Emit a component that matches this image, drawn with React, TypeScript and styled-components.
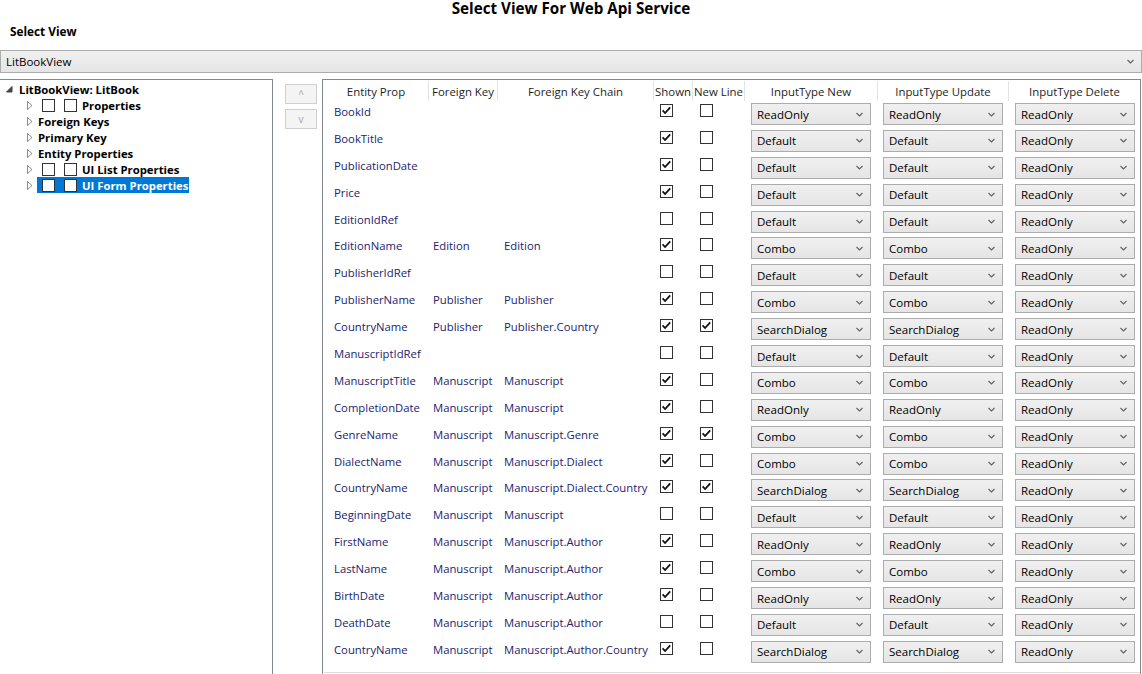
import React from "react";
import styled, { createGlobalStyle } from "styled-components";

const GlobalStyle = createGlobalStyle`
  html, body { margin: 0; padding: 0; background: #ffffff; }
  body {
    width: 1142px; height: 674px; overflow: hidden;
    font-family: "Open Sans", "Noto Sans", "Liberation Sans", sans-serif;
    font-size: 12px; color: #000;
  }
  * { box-sizing: border-box; }
`;

const Page = styled.div`
  display: flex; flex-direction: column; width: 1142px; height: 674px;
`;

const Title = styled.div`
  height: 17px; line-height: 17px; text-align: center;
  font-weight: 700; font-size: 15.2px; color: #000;
`;

const Label = styled.div`
  margin-top: 6px; height: 16px; line-height: 16px; padding-left: 10px;
  font-weight: 700; font-size: 11.8px;
`;

const ViewCombo = styled.div`
  margin-top: 11px; height: 23px; width: 1142px;
  border: 1px solid #acacac;
  background: linear-gradient(#f0f0f0, #e5e5e5);
  display: flex; align-items: center; justify-content: space-between;
  padding: 0 7px 0 5px; font-size: 11.5px;
`;

const Body = styled.div`
  margin-top: 6px; flex: 1; display: flex; min-height: 0;
`;

const TreePanel = styled.div`
  width: 273px; border-top: 1px solid #828790; border-right: 1px solid #828790;
  padding-top: 1px;
`;

const TreeRow = styled.div<{ $indent: number }>`
  height: 16px; display: flex; align-items: center;
  padding-left: ${(p) => p.$indent}px;
`;

const Expander = styled.span<{ $w: number }>`
  width: ${(p) => p.$w}px; height: 16px; display: inline-flex; align-items: center; justify-content: flex-start;
  flex: none;
`;

const TreeHeader = styled.span<{ $selected?: boolean }>`
  display: inline-flex; align-items: center; height: 16px; padding-right: 1px;
  font-weight: 700; font-size: 11.3px; white-space: nowrap;
  background: ${(p) => (p.$selected ? "#0078d7" : "transparent")};
  color: ${(p) => (p.$selected ? "#ffffff" : "#000")};
`;

const TreeBox = styled.span<{ $ml: number; $mr: number }>`
  width: 13px; height: 13px; border: 1px solid #333; background: #fff; flex: none;
  margin-left: ${(p) => p.$ml}px; margin-right: ${(p) => p.$mr}px;
`;

const TreeSpacer = styled.span`
  width: 1px; flex: none;
`;

const ButtonCol = styled.div`
  width: 49px; display: flex; flex-direction: column; gap: 5px; padding: 5px 0 0 12px;
`;

const MoveButton = styled.div`
  width: 32px; height: 20px; border: 1px solid #d0d0d0; background: #f4f4f4;
  color: #a3a3a3; font-size: 10px; display: flex; align-items: center; justify-content: center;
`;

const GridPanel = styled.div`
  width: 819px; border: 1px solid #828790; border-bottom: none; padding-left: 1px;
  display: flex; flex-direction: column;
`;

const cols = [105, 69, 156, 39, 52, 133, 131, 131];

const HeaderRow = styled.div`
  display: flex; height: 21px; padding-top: 1px;
`;

const HeaderCell = styled.div<{ $w: number; $last?: boolean }>`
  width: ${(p) => p.$w}px; flex: none; text-align: center; line-height: 18px; padding-top: 2px;
  font-size: 11.4px; color: #1e1e1e; white-space: nowrap; overflow: hidden;
  border-right: ${(p) => (p.$last ? "none" : "1px solid #e3e3e3")};
`;

const Row = styled.div`
  display: flex; height: 26.9px; flex: none;
`;

const TextCell = styled.div<{ $w: number; $pad: number }>`
  width: ${(p) => p.$w}px; flex: none; padding-left: ${(p) => p.$pad}px;
  line-height: 17px; padding-top: 2px; color: #23236e; font-size: 11.3px; white-space: nowrap;
`;

const BoxCell = styled.div<{ $w: number; $pad: number }>`
  width: ${(p) => p.$w}px; flex: none; padding-left: ${(p) => p.$pad}px; padding-top: 3px;
`;

const ComboCell = styled.div<{ $w: number; $pad: number }>`
  width: ${(p) => p.$w}px; flex: none; padding-left: ${(p) => p.$pad}px; padding-top: 2px;
`;

const CellCombo = styled.div`
  width: 120px; height: 22px; border: 1px solid #acacac;
  background: linear-gradient(#f0f0f0, #e5e5e5);
  display: flex; align-items: center; justify-content: space-between;
  padding: 0 7px 0 5px; font-size: 11.5px; color: #000;
`;

const ScrollLine = styled.div`
  margin-top: auto; height: 2px; border-top: 1px solid #dcdcdc;
`;

const Chevron = () => (
  <svg width="7" height="5" viewBox="0 0 7 5">
    <path d="M0.5 1 L3.5 4 L6.5 1" fill="none" stroke="#606060" strokeWidth="1.1" />
  </svg>
);

const Check = ({ checked }: { checked: boolean }) => (
  <svg width="13" height="13" viewBox="0 0 13 13" style={{ display: "block" }}>
    <rect x="0.5" y="0.5" width="12" height="12" fill="#fff" stroke="#333" />
    {checked && <path d="M2.6 6.4 L5.1 9 L10.2 3.4" fill="none" stroke="#111" strokeWidth="1.8" />}
  </svg>
);

const Closed = () => (
  <svg width="6" height="9" viewBox="0 0 6 9">
    <path d="M0.5 0.5 L5 4.5 L0.5 8.5 Z" fill="#fff" stroke="#8a8a8a" />
  </svg>
);

const Open = () => (
  <svg width="7" height="7" viewBox="0 0 7 7">
    <path d="M6 0.5 L6 6 L0.5 6 Z" fill="#444" stroke="#444" />
  </svg>
);

type R = [string, string, string, boolean, boolean, string, string, string];
const rows: R[] = [
  ["BookId", "", "", true, false, "ReadOnly", "ReadOnly", "ReadOnly"],
  ["BookTitle", "", "", true, false, "Default", "Default", "ReadOnly"],
  ["PublicationDate", "", "", true, false, "Default", "Default", "ReadOnly"],
  ["Price", "", "", true, false, "Default", "Default", "ReadOnly"],
  ["EditionIdRef", "", "", false, false, "Default", "Default", "ReadOnly"],
  ["EditionName", "Edition", "Edition", true, false, "Combo", "Combo", "ReadOnly"],
  ["PublisherIdRef", "", "", false, false, "Default", "Default", "ReadOnly"],
  ["PublisherName", "Publisher", "Publisher", true, false, "Combo", "Combo", "ReadOnly"],
  ["CountryName", "Publisher", "Publisher.Country", true, true, "SearchDialog", "SearchDialog", "ReadOnly"],
  ["ManuscriptIdRef", "", "", false, false, "Default", "Default", "ReadOnly"],
  ["ManuscriptTitle", "Manuscript", "Manuscript", true, false, "Combo", "Combo", "ReadOnly"],
  ["CompletionDate", "Manuscript", "Manuscript", true, false, "ReadOnly", "ReadOnly", "ReadOnly"],
  ["GenreName", "Manuscript", "Manuscript.Genre", true, true, "Combo", "Combo", "ReadOnly"],
  ["DialectName", "Manuscript", "Manuscript.Dialect", true, false, "Combo", "Combo", "ReadOnly"],
  ["CountryName", "Manuscript", "Manuscript.Dialect.Country", true, true, "SearchDialog", "SearchDialog", "ReadOnly"],
  ["BeginningDate", "Manuscript", "Manuscript", false, false, "Default", "Default", "ReadOnly"],
  ["FirstName", "Manuscript", "Manuscript.Author", true, false, "ReadOnly", "ReadOnly", "ReadOnly"],
  ["LastName", "Manuscript", "Manuscript.Author", true, false, "Combo", "Combo", "ReadOnly"],
  ["BirthDate", "Manuscript", "Manuscript.Author", true, false, "ReadOnly", "ReadOnly", "ReadOnly"],
  ["DeathDate", "Manuscript", "Manuscript.Author", false, false, "Default", "Default", "ReadOnly"],
  ["CountryName", "Manuscript", "Manuscript.Author.Country", true, false, "SearchDialog", "SearchDialog", "ReadOnly"],
];

const headers = ["Entity Prop", "Foreign Key", "Foreign Key Chain", "Shown", "New Line", "InputType New", "InputType Update", "InputType Delete"];

const treeItems: { label: string; boxes: boolean; selected?: boolean }[] = [
  { label: "Properties", boxes: true },
  { label: "Foreign Keys", boxes: false },
  { label: "Primary Key", boxes: false },
  { label: "Entity Properties", boxes: false },
  { label: "UI List Properties", boxes: true },
  { label: "UI Form Properties", boxes: true, selected: true },
];

export default function App() {
  return (
    <Page>
      <GlobalStyle />
      <Title>Select View For Web Api Service</Title>
      <Label>Select View</Label>
      <ViewCombo>
        <span>LitBookView</span>
        <Chevron />
      </ViewCombo>
      <Body>
        <TreePanel>
          <TreeRow $indent={6}>
            <Expander $w={13}><Open /></Expander>
            <TreeHeader>LitBookView: LitBook</TreeHeader>
          </TreeRow>
          {treeItems.map((t) => (
            <TreeRow $indent={27} key={t.label}>
              <Expander $w={10}><Closed /></Expander>
              <TreeHeader $selected={t.selected}>
                {t.boxes ? (
                  <>
                    <TreeBox $ml={5} $mr={0} />
                    <TreeBox $ml={9} $mr={5} />
                  </>
                ) : (
                  <TreeSpacer />
                )}
                {t.label}
              </TreeHeader>
            </TreeRow>
          ))}
        </TreePanel>
        <ButtonCol>
          <MoveButton>^</MoveButton>
          <MoveButton>v</MoveButton>
        </ButtonCol>
        <GridPanel>
          <HeaderRow>
            {headers.map((h, i) => (
              <HeaderCell key={h} $w={cols[i]} $last={i === headers.length - 1}>{h}</HeaderCell>
            ))}
          </HeaderRow>
          {rows.map((r, i) => (
            <Row key={i}>
              <TextCell $w={cols[0]} $pad={10}>{r[0]}</TextCell>
              <TextCell $w={cols[1]} $pad={4}>{r[1]}</TextCell>
              <TextCell $w={cols[2]} $pad={6}>{r[2]}</TextCell>
              <BoxCell $w={cols[3]} $pad={6}><Check checked={r[3]} /></BoxCell>
              <BoxCell $w={cols[4]} $pad={7}><Check checked={r[4]} /></BoxCell>
              <ComboCell $w={cols[5]} $pad={6}><CellCombo><span>{r[5]}</span><Chevron /></CellCombo></ComboCell>
              <ComboCell $w={cols[6]} $pad={5}><CellCombo><span>{r[6]}</span><Chevron /></CellCombo></ComboCell>
              <ComboCell $w={cols[7]} $pad={6}><CellCombo><span>{r[7]}</span><Chevron /></CellCombo></ComboCell>
            </Row>
          ))}
          <ScrollLine />
        </GridPanel>
      </Body>
    </Page>
  );
}
